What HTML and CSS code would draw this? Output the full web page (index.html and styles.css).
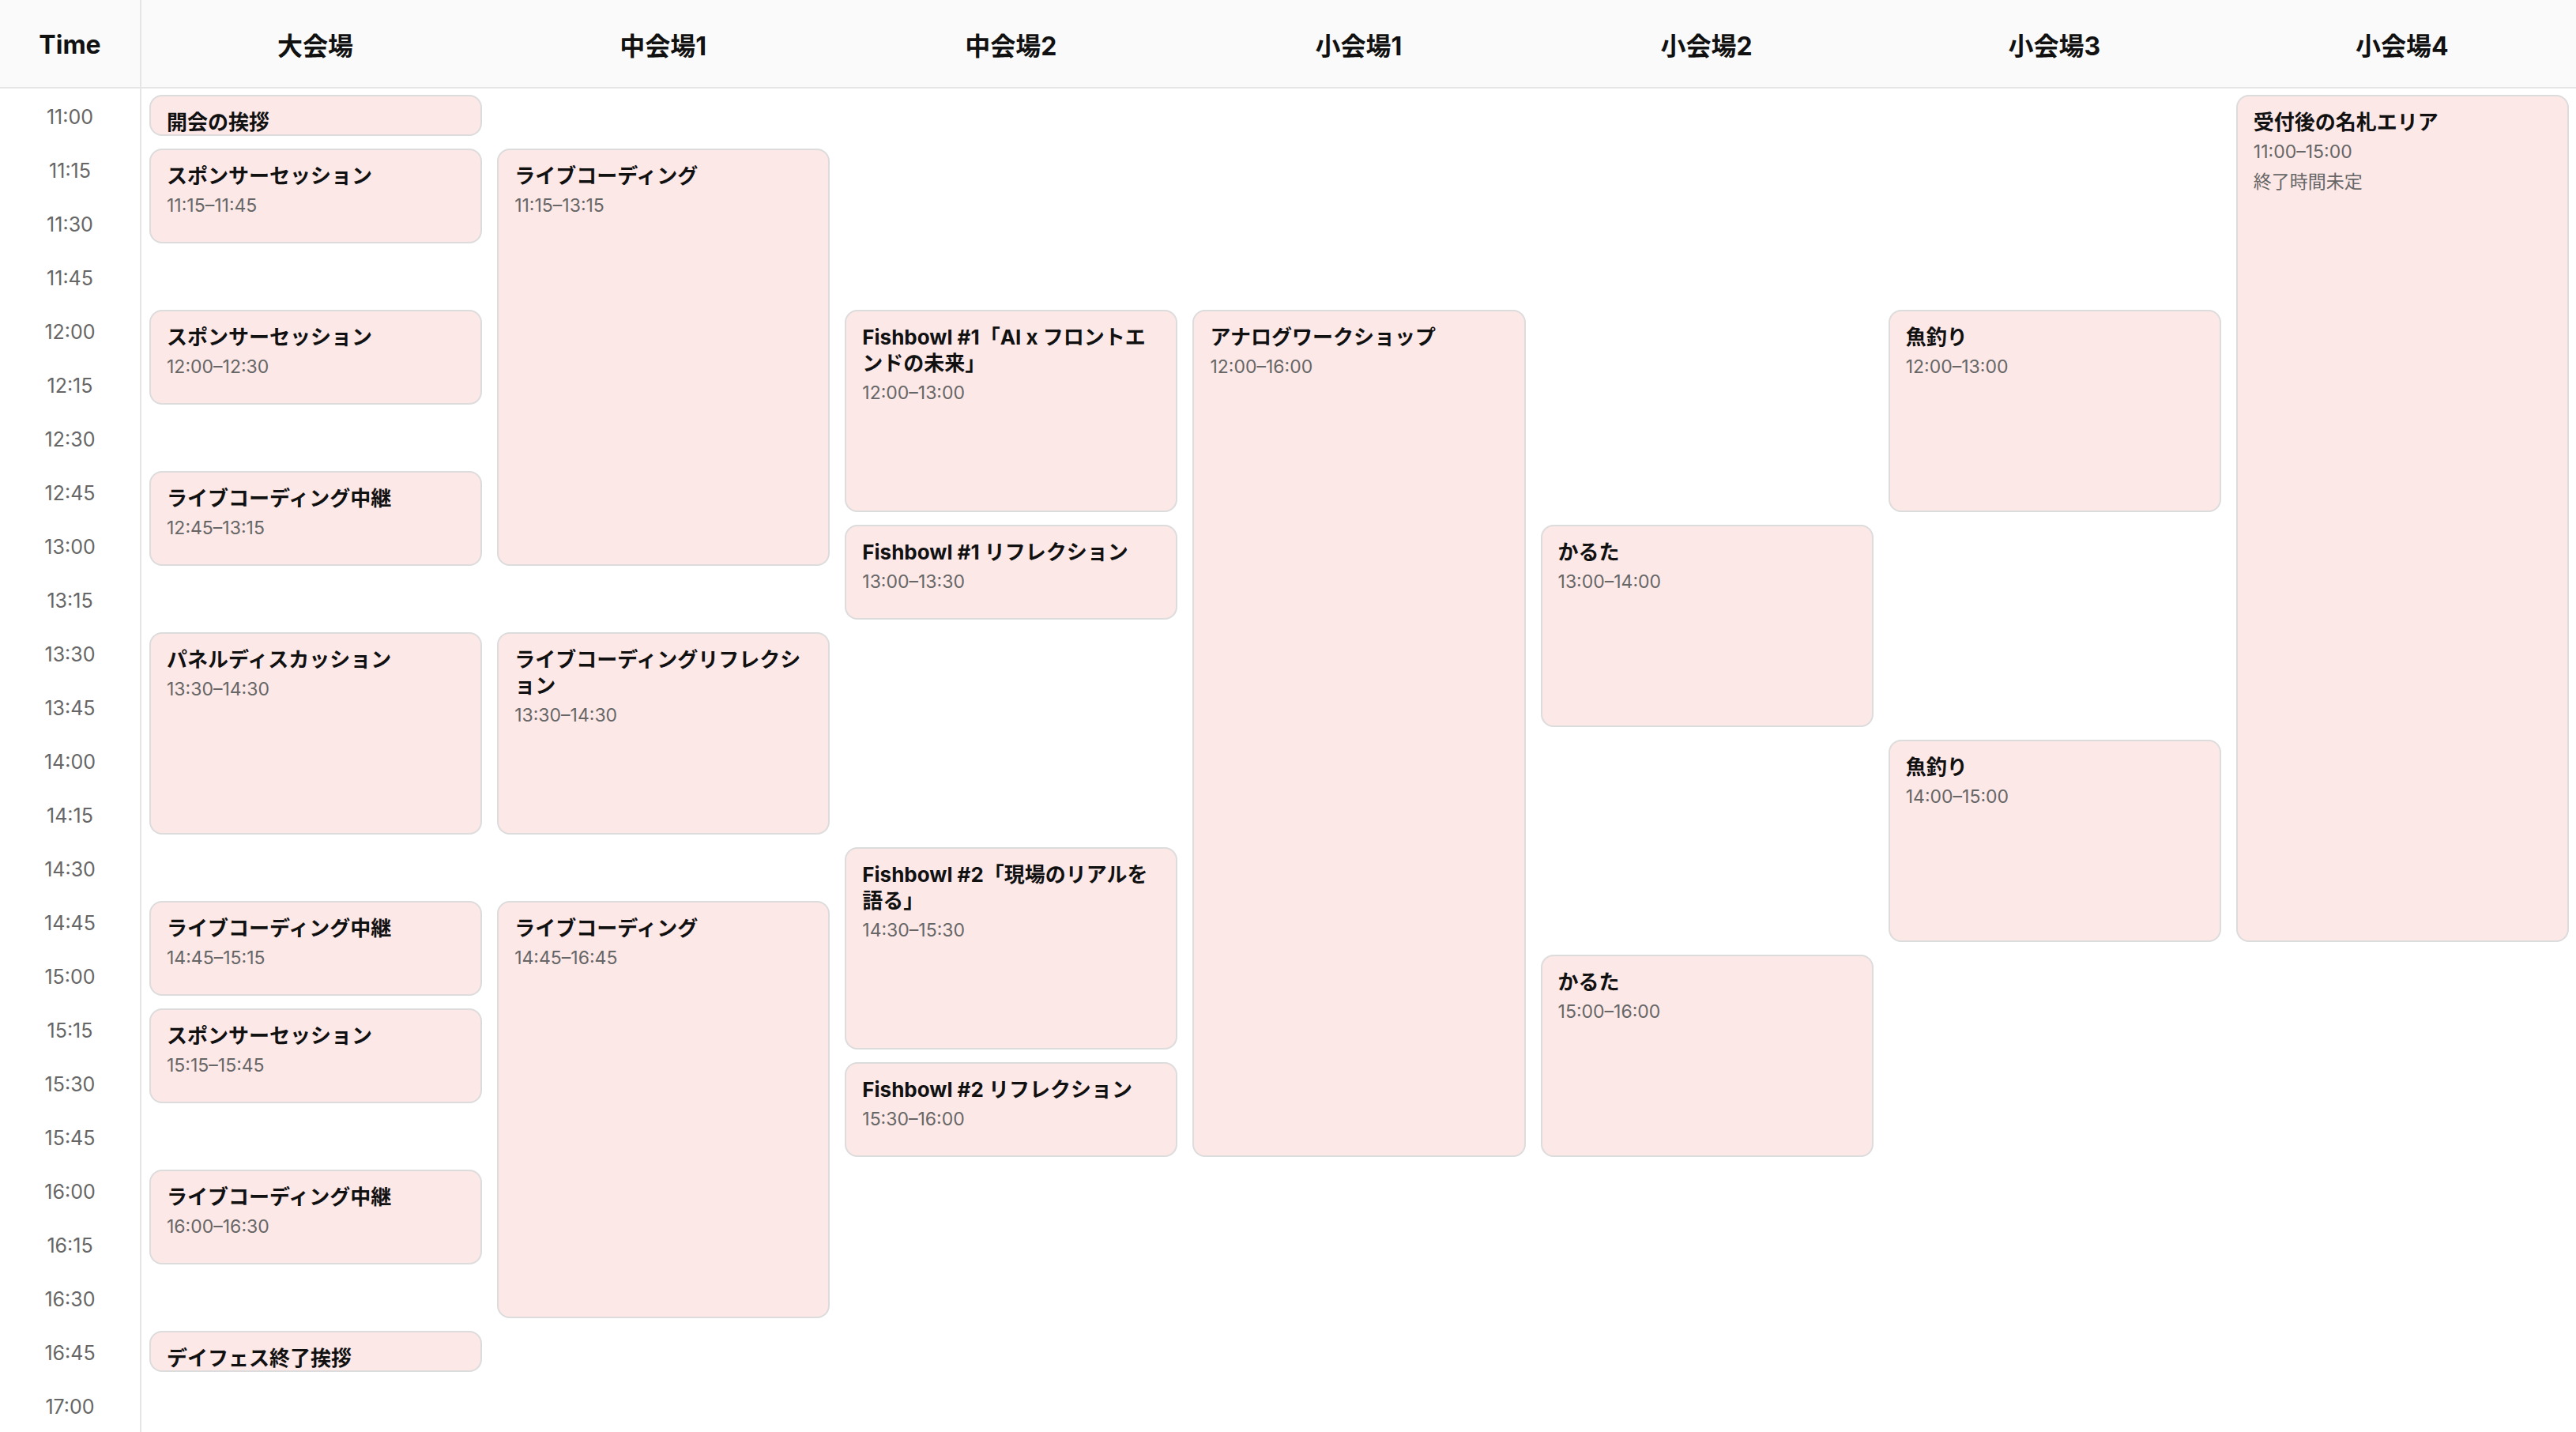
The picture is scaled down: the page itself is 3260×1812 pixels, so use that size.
FILE: index.html
```html
<!DOCTYPE html>
<html lang="ja">
<head>
<meta charset="utf-8">
<title>Timetable</title>
<link rel="stylesheet" href="styles.css">
</head>
<body>
<div class="schedule">
  <div class="head">
    <div class="head-cell head-time">Time</div>
    <div class="head-cell">大会場</div>
    <div class="head-cell">中会場1</div>
    <div class="head-cell">中会場2</div>
    <div class="head-cell">小会場1</div>
    <div class="head-cell">小会場2</div>
    <div class="head-cell">小会場3</div>
    <div class="head-cell">小会場4</div>
  </div>
  <div class="body">
    <div class="times">
      <div class="slot">11:00</div><div class="slot">11:15</div><div class="slot">11:30</div><div class="slot">11:45</div>
      <div class="slot">12:00</div><div class="slot">12:15</div><div class="slot">12:30</div><div class="slot">12:45</div>
      <div class="slot">13:00</div><div class="slot">13:15</div><div class="slot">13:30</div><div class="slot">13:45</div>
      <div class="slot">14:00</div><div class="slot">14:15</div><div class="slot">14:30</div><div class="slot">14:45</div>
      <div class="slot">15:00</div><div class="slot">15:15</div><div class="slot">15:30</div><div class="slot">15:45</div>
      <div class="slot">16:00</div><div class="slot">16:15</div><div class="slot">16:30</div><div class="slot">16:45</div>
      <div class="slot">17:00</div>
    </div>

    <div class="venue">
      <div class="event" style="grid-row: 1 / 2"><div class="title">開会の挨拶</div></div>
      <div class="event" style="grid-row: 2 / 4"><div class="title">スポンサーセッション</div><div class="meta">11:15–11:45</div></div>
      <div class="event" style="grid-row: 5 / 7"><div class="title">スポンサーセッション</div><div class="meta">12:00–12:30</div></div>
      <div class="event" style="grid-row: 8 / 10"><div class="title">ライブコーディング中継</div><div class="meta">12:45–13:15</div></div>
      <div class="event" style="grid-row: 11 / 15"><div class="title">パネルディスカッション</div><div class="meta">13:30–14:30</div></div>
      <div class="event" style="grid-row: 16 / 18"><div class="title">ライブコーディング中継</div><div class="meta">14:45–15:15</div></div>
      <div class="event" style="grid-row: 18 / 20"><div class="title">スポンサーセッション</div><div class="meta">15:15–15:45</div></div>
      <div class="event" style="grid-row: 21 / 23"><div class="title">ライブコーディング中継</div><div class="meta">16:00–16:30</div></div>
      <div class="event" style="grid-row: 24 / 25"><div class="title">デイフェス終了挨拶</div></div>
    </div>

    <div class="venue">
      <div class="event" style="grid-row: 2 / 10"><div class="title">ライブコーディング</div><div class="meta">11:15–13:15</div></div>
      <div class="event" style="grid-row: 11 / 15"><div class="title">ライブコーディングリフレクション</div><div class="meta">13:30–14:30</div></div>
      <div class="event" style="grid-row: 16 / 24"><div class="title">ライブコーディング</div><div class="meta">14:45–16:45</div></div>
    </div>

    <div class="venue">
      <div class="event" style="grid-row: 5 / 9"><div class="title">Fishbowl #1「AI x フロントエンドの未来」</div><div class="meta">12:00–13:00</div></div>
      <div class="event" style="grid-row: 9 / 11"><div class="title">Fishbowl #1 リフレクション</div><div class="meta">13:00–13:30</div></div>
      <div class="event" style="grid-row: 15 / 19"><div class="title">Fishbowl #2「現場のリアルを語る」</div><div class="meta">14:30–15:30</div></div>
      <div class="event" style="grid-row: 19 / 21"><div class="title">Fishbowl #2 リフレクション</div><div class="meta">15:30–16:00</div></div>
    </div>

    <div class="venue">
      <div class="event" style="grid-row: 5 / 21"><div class="title">アナログワークショップ</div><div class="meta">12:00–16:00</div></div>
    </div>

    <div class="venue">
      <div class="event" style="grid-row: 9 / 13"><div class="title">かるた</div><div class="meta">13:00–14:00</div></div>
      <div class="event" style="grid-row: 17 / 21"><div class="title">かるた</div><div class="meta">15:00–16:00</div></div>
    </div>

    <div class="venue">
      <div class="event" style="grid-row: 5 / 9"><div class="title">魚釣り</div><div class="meta">12:00–13:00</div></div>
      <div class="event" style="grid-row: 13 / 17"><div class="title">魚釣り</div><div class="meta">14:00–15:00</div></div>
    </div>

    <div class="venue">
      <div class="event" style="grid-row: 1 / 17"><div class="title">受付後の名札エリア</div><div class="meta">11:00–15:00</div><div class="meta">終了時間未定</div></div>
    </div>
  </div>
</div>
</body>
</html>
```
FILE: styles.css
```css
* {
  box-sizing: border-box;
}

html, body {
  margin: 0;
  padding: 0;
  background: #ffffff;
}

body {
  font-family: Inter, "Noto Sans CJK JP", sans-serif;
  color: #111111;
}

.schedule {
  width: 3260px;
  height: 1812px;
  overflow: hidden;
}

.head {
  display: grid;
  grid-template-columns: 179px repeat(7, 1fr);
  height: 112px;
  background: #fafafa;
  border-bottom: 2px solid #e5e5e5;
}

.head-cell {
  display: flex;
  align-items: center;
  justify-content: center;
  font-size: 32px;
  font-weight: 700;
  color: #111111;
  padding-top: 2px;
}

.head-time {
  border-right: 2px solid #e5e5e5;
}

.body {
  display: grid;
  grid-template-columns: 179px repeat(7, 1fr);
}

.times {
  display: grid;
  grid-template-rows: repeat(25, 68px);
  border-right: 2px solid #e5e5e5;
}

.slot {
  display: flex;
  align-items: center;
  justify-content: center;
  font-size: 25px;
  color: #666666;
  padding-top: 4px;
}

.venue {
  display: grid;
  grid-template-rows: repeat(25, 68px);
  min-width: 0;
}

.event {
  margin: 8px 9px 8px 10px;
  padding: 16px 20px;
  background: #fde8e8;
  border: 2px solid #dcdcdc;
  border-radius: 16px;
  overflow: hidden;
  min-height: 0;
}

.title {
  font-size: 26px;
  font-weight: 700;
  line-height: 33px;
  color: #111111;
}

.meta {
  margin-top: 4px;
  font-size: 23px;
  line-height: 34px;
  color: #666666;
}
```
